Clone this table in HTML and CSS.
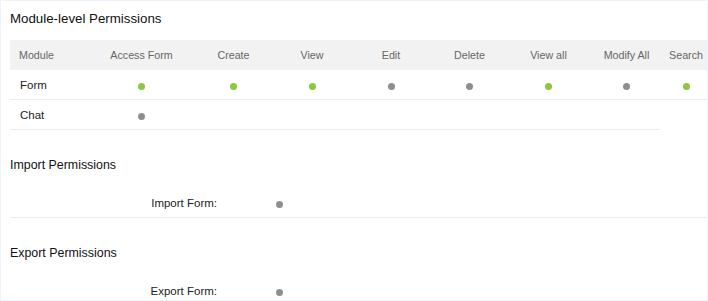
FILE: index.html
```html
<!DOCTYPE html>
<html>
<head>
<meta charset="utf-8">
<link rel="stylesheet" href="styles.css">
</head>
<body>
<div class="panel">
  <h2 class="title">Module-level Permissions</h2>
  <div class="table">
    <div class="row head">
      <div class="cell first">Module</div>
      <div class="cell">Access Form</div>
      <div class="cell">Create</div>
      <div class="cell">View</div>
      <div class="cell">Edit</div>
      <div class="cell">Delete</div>
      <div class="cell">View all</div>
      <div class="cell">Modify All</div>
      <div class="cell">Search</div>
    </div>
    <div class="row">
      <div class="cell first">Form</div>
      <div class="cell"><span class="dot on"></span></div>
      <div class="cell"><span class="dot on"></span></div>
      <div class="cell"><span class="dot on"></span></div>
      <div class="cell"><span class="dot"></span></div>
      <div class="cell"><span class="dot"></span></div>
      <div class="cell"><span class="dot on"></span></div>
      <div class="cell"><span class="dot"></span></div>
      <div class="cell"><span class="dot on"></span></div>
    </div>
    <div class="row short">
      <div class="cell first">Chat</div>
      <div class="cell"><span class="dot"></span></div>
    </div>
  </div>

  <div class="section">
    <h3 class="section-title">Import Permissions</h3>
    <div class="field bordered">
      <span class="label">Import Form:</span>
      <span class="dot"></span>
    </div>
  </div>

  <div class="section">
    <h3 class="section-title">Export Permissions</h3>
    <div class="field">
      <span class="label">Export Form:</span>
      <span class="dot"></span>
    </div>
  </div>
</div>
</body>
</html>
```

FILE: styles.css
```css
html, body {
  margin: 0;
  padding: 0;
  background: #ffffff;
}

body {
  font-family: "Liberation Sans", Arial, Helvetica, sans-serif;
  color: #2a2a2a;
}

.panel {
  box-sizing: border-box;
  width: 708px;
  height: 301px;
  border: 1px solid #eef3f9;
  padding-left: 9px;
  overflow: hidden;
}

.title {
  margin: 0;
  padding-top: 10px;
  height: 39px;
  box-sizing: border-box;
  font-size: 13.3px;
  line-height: 16px;
  font-weight: normal;
  color: #111;
}

.row {
  display: grid;
  grid-template-columns: 78px 107px 77px 80px 78px 79px 79px 77px 42px;
  height: 30px;
  align-items: center;
  font-size: 11.5px;
  color: #222;
  border-bottom: 1px solid #ececec;
  box-sizing: border-box;
}

.row.head {
  background: #f2f2f2;
  border-bottom: none;
  font-size: 10.7px;
  color: #666;
}

.row.short {
  width: 650px;
}

.cell {
  text-align: center;
  white-space: nowrap;
  display: flex;
  justify-content: center;
  align-items: center;
}

.cell.first {
  justify-content: flex-start;
  padding-left: 10px;
}

.row.head .cell.first {
  padding-left: 9px;
}

.dot {
  display: inline-block;
  width: 7px;
  height: 7px;
  border-radius: 50%;
  background: #8e8e8e;
  margin-top: 3px;
}

.dot.on {
  background: #8dc63f;
}

.section {
  padding-top: 27px;
}

.section-title {
  margin: 0 0 15px 0;
  font-size: 12.4px;
  line-height: 16px;
  font-weight: normal;
  color: #111;
}

.field {
  display: flex;
  align-items: center;
  height: 30px;
  font-size: 11.5px;
  color: #222;
  box-sizing: border-box;
}

.field.bordered {
  border-bottom: 1px solid #ececec;
}

.field .label {
  width: 207px;
  text-align: right;
}

.field .dot {
  margin-left: 59px;
}
```
